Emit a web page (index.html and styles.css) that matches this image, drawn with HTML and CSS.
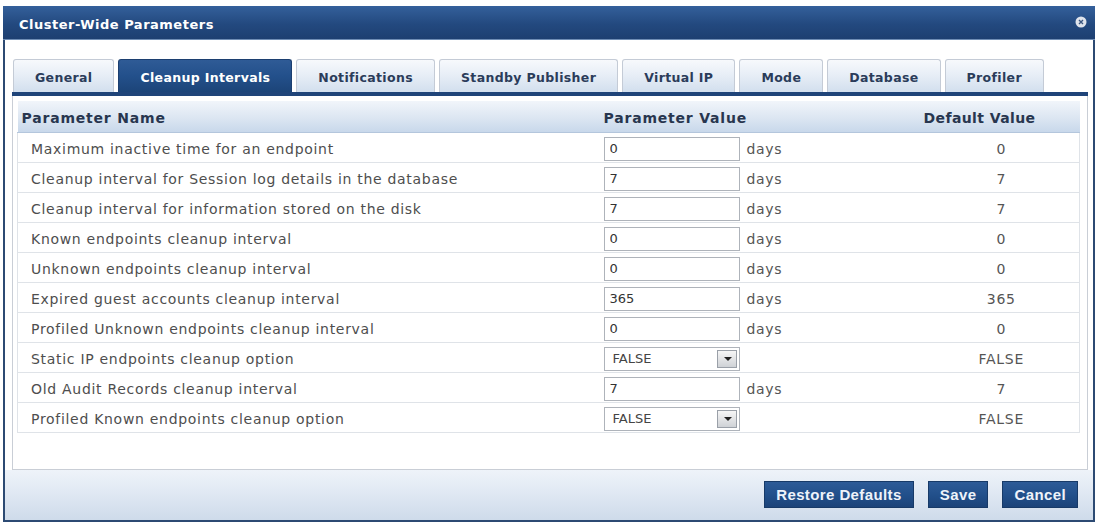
FILE: index.html
```html
<!DOCTYPE html>
<html lang="en">
<head>
  <meta charset="UTF-8" />
  <title>Cluster-Wide Parameters</title>
  <link rel="stylesheet" href="styles.css">
</head>
<body>
  <div class="dialog">
    <div class="titlebar">
      <span class="title">Cluster-Wide Parameters</span>
      <svg class="close" width="12" height="12" viewBox="0 0 12 12">
        <circle cx="6" cy="6" r="5.5" fill="#dfe4ec"/>
        <path d="M4 4L8 8M8 4L4 8" stroke="#3b5680" stroke-width="1.4"/>
      </svg>
    </div>

    <div class="content">
      <div class="tabs">
        <div class="tab">General</div>
        <div class="tab active">Cleanup Intervals</div>
        <div class="tab">Notifications</div>
        <div class="tab">Standby Publisher</div>
        <div class="tab">Virtual IP</div>
        <div class="tab">Mode</div>
        <div class="tab">Database</div>
        <div class="tab">Profiler</div>
      </div>

      <div class="panel">
        <table class="params">
          <thead>
            <tr>
              <th class="col-name">Parameter Name</th>
              <th class="col-value">Parameter Value</th>
              <th class="col-default">Default Value</th>
            </tr>
          </thead>
          <tbody>
            <tr>
              <td class="name">Maximum inactive time for an endpoint</td>
              <td class="value"><input class="field" type="text" value="0"><span class="unit">days</span></td>
              <td class="default">0</td>
            </tr>
            <tr>
              <td class="name">Cleanup interval for Session log details in the database</td>
              <td class="value"><input class="field" type="text" value="7"><span class="unit">days</span></td>
              <td class="default">7</td>
            </tr>
            <tr>
              <td class="name">Cleanup interval for information stored on the disk</td>
              <td class="value"><input class="field" type="text" value="7"><span class="unit">days</span></td>
              <td class="default">7</td>
            </tr>
            <tr>
              <td class="name">Known endpoints cleanup interval</td>
              <td class="value"><input class="field" type="text" value="0"><span class="unit">days</span></td>
              <td class="default">0</td>
            </tr>
            <tr>
              <td class="name">Unknown endpoints cleanup interval</td>
              <td class="value"><input class="field" type="text" value="0"><span class="unit">days</span></td>
              <td class="default">0</td>
            </tr>
            <tr>
              <td class="name">Expired guest accounts cleanup interval</td>
              <td class="value"><input class="field" type="text" value="365"><span class="unit">days</span></td>
              <td class="default">365</td>
            </tr>
            <tr>
              <td class="name">Profiled Unknown endpoints cleanup interval</td>
              <td class="value"><input class="field" type="text" value="0"><span class="unit">days</span></td>
              <td class="default">0</td>
            </tr>
            <tr>
              <td class="name">Static IP endpoints cleanup option</td>
              <td class="value">
                <div class="select"><span class="select-text">FALSE</span><span class="select-arrow"></span></div>
              </td>
              <td class="default">FALSE</td>
            </tr>
            <tr>
              <td class="name">Old Audit Records cleanup interval</td>
              <td class="value"><input class="field" type="text" value="7"><span class="unit">days</span></td>
              <td class="default">7</td>
            </tr>
            <tr>
              <td class="name">Profiled Known endpoints cleanup option</td>
              <td class="value">
                <div class="select"><span class="select-text">FALSE</span><span class="select-arrow"></span></div>
              </td>
              <td class="default">FALSE</td>
            </tr>
          </tbody>
        </table>
      </div>
    </div>

    <div class="footer">
      <button class="btn">Restore Defaults</button>
      <button class="btn">Save</button>
      <button class="btn">Cancel</button>
    </div>
  </div>
</body>
</html>
```

FILE: styles.css
```css
html, body {
  margin: 0;
  padding: 0;
  background: white;
  font-family: "DejaVu Sans", Verdana, sans-serif;
}

*,
*::before,
*::after {
  box-sizing: border-box;
}

.dialog {
  margin: 6px 3px 0 3px;
  height: 516px;
  border-left: 2px solid #2c4a73;
  border-right: 2px solid #2c4a73;
  display: flex;
  flex-direction: column;
  background: white;
}

.titlebar {
  height: 34px;
  margin: 0 -2px;
  padding: 4px 8px 0 16px;
  display: flex;
  align-items: center;
  justify-content: space-between;
  background: linear-gradient(#34609b, #23497f 55%, #1d3f71);
  border-bottom: 1px solid #6f8db5;
}

.title {
  color: white;
  font-weight: bold;
  font-size: 13px;
  letter-spacing: 0.5px;
}

.close {
  margin-top: -5px;
}

.content {
  flex: 1;
  padding: 19px 5px 0 7px;
  display: flex;
  flex-direction: column;
}

/* tab strip */
.tabs {
  display: flex;
  gap: 4px;
  padding-left: 1px;
  border-bottom: 4px solid #1f4479;
}

.tab {
  height: 33px;
  padding: 3px 21px 0;
  display: flex;
  align-items: center;
  font-size: 12.5px;
  font-weight: bold;
  letter-spacing: 0.35px;
  color: #2b3c5a;
  background: linear-gradient(#f7f9fc, #e6edf6 50%, #d2dfee);
  border: 1px solid #c4cbd6;
  border-bottom: none;
  border-radius: 3px 3px 0 0;
}

.tab.active {
  color: white;
  background: linear-gradient(#2f5b96, #23508b 50%, #1c4478);
  border-color: #1c3f70;
}

.panel {
  flex: 1;
  border: 1px solid #c9ced6;
  border-top: none;
  padding: 5px 7px 0 4px;
}

/* parameter table */
.params {
  width: 100%;
  border-collapse: collapse;
  font-size: 14px;
}

.params th {
  height: 31px;
  padding: 4px 0 0;
  text-align: left;
  font-weight: bold;
  font-size: 14px;
  letter-spacing: 0.8px;
  color: #28364f;
  background: linear-gradient(#f1f5fa, #dce6f2 55%, #c8d8eb);
  border-bottom: 1px solid #b4c6dc;
}

.params th.col-name {
  padding-left: 4px;
}

.params th.col-value {
  width: 326px;
  padding-left: 6px;
}

.params th.col-default {
  width: 156px;
  letter-spacing: 0.4px;
}

.params td {
  height: 30px;
  padding: 3px 0 0;
  color: #4e4e4e;
  letter-spacing: 0.7px;
  border-bottom: 1px solid #dfe3e8;
}

.params td.name {
  padding-left: 13px;
  border-left: 1px solid #dfe3e8;
}

.params td.value {
  padding-left: 6px;
  white-space: nowrap;
}

.params td.default {
  text-align: center;
  color: #555;
  border-right: 1px solid #dfe3e8;
}

.field {
  width: 136px;
  height: 24px;
  padding: 0 5px;
  vertical-align: middle;
  font-family: "DejaVu Sans", Verdana, sans-serif;
  font-size: 13px;
  color: #333;
  border: 1px solid #aeb3ba;
  background: white;
}

.unit {
  margin-left: 7px;
  vertical-align: middle;
  color: #555;
}

.select {
  width: 136px;
  height: 24px;
  display: flex;
  align-items: center;
  justify-content: space-between;
  padding: 0 2px 0 8px;
  border: 1px solid #aeb3ba;
  background: white;
}

.select-text {
  font-size: 13px;
  color: #444;
  letter-spacing: 0;
}

.select-arrow {
  width: 20px;
  height: 18px;
  border: 1px solid #9aa0a8;
  background: linear-gradient(#f6f6f6, #cfd2d6);
  position: relative;
}

.select-arrow::after {
  content: "";
  position: absolute;
  left: 6px;
  top: 6px;
  border-left: 4px solid transparent;
  border-right: 4px solid transparent;
  border-top: 4px solid #222;
}

/* footer */
.footer {
  height: 52px;
  margin: 0 -2px;
  padding: 0 15px 2px 0;
  display: flex;
  align-items: center;
  justify-content: flex-end;
  gap: 14px;
  background: linear-gradient(#eef3f9, #e2eaf4 40%, #cedbea);
  border-left: 2px solid #2c4a73;
  border-right: 2px solid #2c4a73;
  border-bottom: 2px solid #2c4a73;
}

.btn {
  height: 27px;
  padding: 0 11px;
  font-family: "Liberation Sans", Arial, sans-serif;
  font-weight: bold;
  font-size: 15px;
  letter-spacing: 0.4px;
  color: #eef3fa;
  background: linear-gradient(#2d5b97, #22508b 50%, #1b4379);
  border: 1px solid #173a68;
  border-radius: 0;
}
```
